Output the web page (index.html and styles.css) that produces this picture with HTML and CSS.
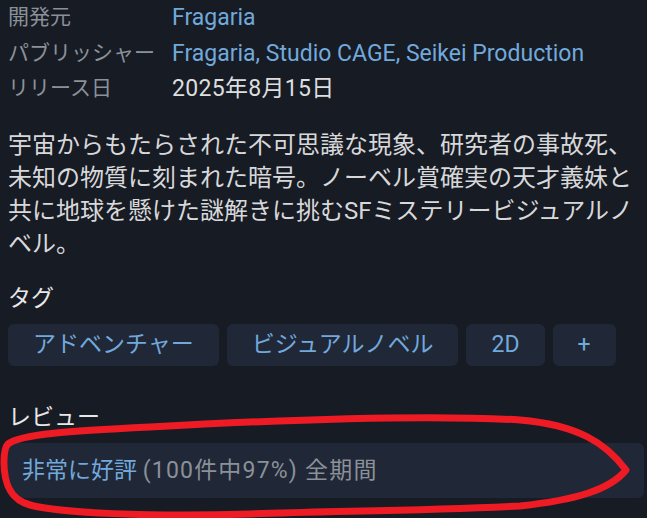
FILE: index.html
```html
<!DOCTYPE html>
<html lang="ja">
<head>
    <meta charset="UTF-8">
    <meta name="viewport" content="width=device-width, initial-scale=1.0">
    <title>Fragaria</title>
    <link rel="stylesheet" href="styles.css">
</head>
<body>
    <div class="page">
        <dl class="info">
            <dt>開発元</dt>
            <dd><a href="#">Fragaria</a></dd>
            <dt>パブリッシャー</dt>
            <dd><a href="#">Fragaria</a>, <a href="#">Studio CAGE</a>, <a href="#">Seikei Production</a></dd>
            <dt>リリース日</dt>
            <dd class="date">2025年8月15日</dd>
        </dl>

        <p class="description">宇宙からもたらされた不可思議な現象、研究者の事故死、未知の物質に刻まれた暗号。ノーベル賞確実の天才義妹と共に地球を懸けた謎解きに挑むSFミステリービジュアルノベル。</p>

        <h2>タグ</h2>
        <div class="tags">
            <a class="tag" href="#">アドベンチャー</a>
            <a class="tag" href="#">ビジュアルノベル</a>
            <a class="tag" href="#">2D</a>
            <a class="tag" href="#">+</a>
        </div>

        <h2 class="review-title">レビュー</h2>
        <div class="review">
            <span class="rating">非常に好評</span> <span class="count">(100件中97%) 全期間</span>
        </div>
    </div>

    <!-- red marker circled around the review -->
    <svg class="marker" width="647" height="518" viewBox="0 0 647 518">
        <path d="M 8 444 C 20 434, 70 431, 150 427 C 260 421, 420 414, 520 420 C 578 425, 606 443, 626 470 C 610 490, 575 500, 520 506 C 420 511, 330 511, 250 514 C 150 517, 60 513, 30 505 C 8 499, 4 480, 4 462 C 4 452, 5 447, 8 444 Z"
              fill="none" stroke="#ee1b24" stroke-width="7" stroke-linejoin="round"/>
    </svg>
</body>
</html>
```

FILE: styles.css
```css
body {
    margin: 0;
    padding: 0;
    background-color: #171b24;
    color: #d7d8da;
    font-family: 'Roboto', 'Noto Sans CJK JP', sans-serif;
}

a {
    color: #72a9dc;
    text-decoration: none;
}

.page {
    padding: 0 3px 0 8px;
}

.info {
    display: grid;
    grid-template-columns: 164px auto;
    margin: 0;
    line-height: 35.5px;
}
.info dt {
    font-size: 21px;
    color: #8b9199;
}
.info dd {
    margin: 0;
    font-size: 23px;
    color: #72a9dc;
}
.info dd.date {
    color: #dcdedf;
    letter-spacing: 0.3px;
}

.description {
    margin: 22px 0 0;
    font-size: 24px;
    line-height: 33px;
    color: #d7d8da;
}

h2 {
    margin: 21px 0 0;
    font-size: 23px;
    font-weight: normal;
    line-height: 33px;
    color: #e8e8e8;
}

.tags {
    display: flex;
    gap: 8px;
    margin-top: 9px;
}
.tag {
    height: 42px;
    line-height: 42px;
    padding: 0 25px;
    border-radius: 6px;
    background-color: #202736;
    font-size: 23px;
    color: #72a9dc;
}

.review-title {
    margin-top: 35px;
}

.review {
    margin-top: 9px;
    height: 55px;
    line-height: 55px;
    padding: 0 14px;
    border-radius: 6px;
    background-color: #202736;
    font-size: 23px;
    color: #8b9199;
}
.review .rating {
    color: #72a9dc;
}
.review .count {
    letter-spacing: 1.2px;
}

.marker {
    position: absolute;
    top: 0;
    left: 0;
    pointer-events: none;
}
```
